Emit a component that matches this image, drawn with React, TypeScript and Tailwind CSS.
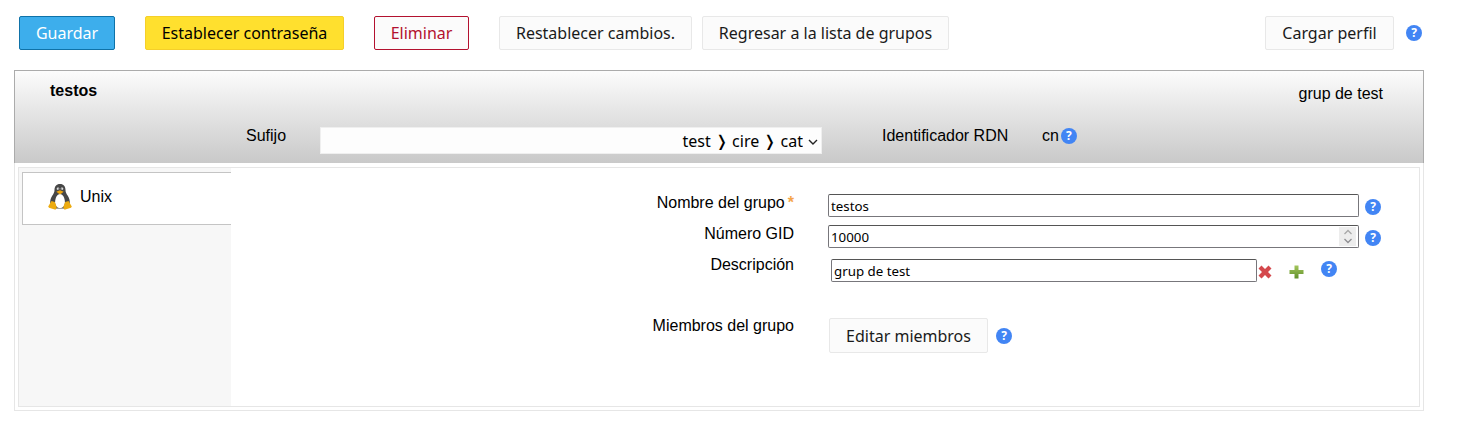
const sans = "font-['Liberation_Sans',Arial,sans-serif]";
const noto = "font-['Noto_Sans',sans-serif]";

function Help({ className = '' }: { className?: string }) {
  return (
    <span
      className={`flex h-4 w-4 shrink-0 items-center justify-center rounded-full bg-[#4285f4] font-['Noto_Sans',sans-serif] text-[12px] leading-none font-bold text-white ${className}`}
    >
      ?
    </span>
  );
}

function Penguin() {
  return (
    <svg width="24" height="26" viewBox="0 0 24 26" className="shrink-0">
      <path d="M12 0C8.300 0 6.500 2.600 6.500 6c0 2.400-1 3.800-2.300 5.800C2.800 14 2 16.500 2.200 19.500L6 24.500h12l3.800-5c.2-3-.6-5.500-2-7.700-1.300-2-2.300-3.400-2.300-5.800C17.500 2.600 15.700 0 12 0z" fill="#474747" />
      <path d="M12 10c-2.800 0-4.900 4-4.900 8.200 0 3.700 2.100 5.800 4.900 5.800s4.900-2.100 4.900-5.800C16.900 14 14.800 10 12 10z" fill="#fff" />
      <circle cx="10" cy="4.800" r="1.300" fill="#e8e8e8" />
      <circle cx="14" cy="4.800" r="1.300" fill="#e8e8e8" />
      <circle cx="10.300" cy="5" r=".6" fill="#222" />
      <circle cx="13.700" cy="5" r=".6" fill="#222" />
      <path d="M8.300 7.800 12 6.200l3.700 1.600L12 10.400z" fill="#eda50f" />
      <path d="M3.500 17 .2 22.500l.8 1.300 6.500 2 1.300-2.600L6.800 18z" fill="#edab0f" />
      <path d="M20.500 17l3.300 5.500-.8 1.300-6.500 2-1.300-2.600L17.200 18z" fill="#edab0f" />
    </svg>
  );
}

function Btn({ children, className = '' }: { children: React.ReactNode; className?: string }) {
  return <button className={`rounded-[2px] border text-[16px] leading-none ${noto} ${className}`}>{children}</button>;
}

const plainBtn = 'border-[#e8e8e8] bg-[#fbfbfb] text-[#1a1a1a]';

function Label({ children, className = '' }: { children: React.ReactNode; className?: string }) {
  return (
    <label className={`w-[563px] shrink-0 text-right text-[16px] leading-[18px] text-black ${sans} ${className}`}>{children}</label>
  );
}

const inputCls = `h-[23px] rounded-[2px] border border-[#77767b] border-t-[#555] bg-white px-[2px] text-[13.300px] text-black outline-none ${noto}`;

export default function App() {
  return (
    <div className="h-[432px] w-[1464px] overflow-hidden bg-white">
      {/* Toolbar */}
      <div className="flex pt-4 pl-[19px]">
        <Btn className="h-[34px] w-[96px] border-[#0f72a8] bg-[#3daeec] text-white">Guardar</Btn>
        <Btn className="ml-[30px] h-[34px] w-[199px] border-[#f5cf2a] bg-[#ffe02e] text-black">Establecer contraseña</Btn>
        <Btn className="ml-[30px] h-[34px] w-[95px] border-[#b3112f] bg-[#fbfbfb] text-[#b3112f]">Eliminar</Btn>
        <Btn className={`ml-[30px] h-[34px] w-[193px] ${plainBtn}`}>Restablecer cambios.</Btn>
        <Btn className={`ml-[10px] h-[34px] w-[247px] ${plainBtn}`}>Regresar a la lista de grupos</Btn>
        <Btn className={`ml-[316px] h-[34px] w-[129px] ${plainBtn}`}>Cargar perfil</Btn>
        <Help className="mt-[9px] ml-3" />
      </div>

      {/* Panel */}
      <div className="mt-5 ml-[14px] h-[341px] w-[1410px] border border-t-0 border-[#e6e6e6]">
        <div className={`-mx-px h-[93px] w-[1410px] border border-b-0 border-[#ababab] bg-gradient-to-b from-[#fcfcfc] to-[#c9c9c9] text-black ${sans}`}>
          <div className="flex justify-between pt-[11px] pr-10 pl-[35px]">
            <span className="text-[16px] leading-[18px] font-bold">testos</span>
            <span className="mt-[3px] text-[16px] leading-[18px]">grup de test</span>
          </div>
          <div className="mt-[24px] flex items-start pl-[231px] text-[16px] leading-[18px]">
            <span className="w-[74px]">Sufijo</span>
            <div className="relative h-[27px] w-[502px]">
              <select
                defaultValue="a"
                className={`h-[27px] w-[502px] appearance-none border border-[#efefef] bg-[#fdfdfd] pr-[18px] text-[16px] [text-align-last:right] ${noto}`}
              >
                <option value="a">test ❭ cire ❭ cat</option>
              </select>
              <svg width="10" height="6" viewBox="0 0 10 6" className="absolute top-[12px] right-[4px]">
                <path d="M1 1l4 4 4-4" fill="none" stroke="#222" strokeWidth="1.400" />
              </svg>
            </div>
            <span className="ml-[60px] w-[160px]">Identificador RDN</span>
            <span>cn</span>
            <Help className="mt-[1px] ml-[2px]" />
          </div>
        </div>

        <div className="mx-[3px] mt-1 flex h-[240px] border border-[#e6e6e6]">
          {/* Sidebar */}
          <div className="w-[212px] shrink-0 bg-[#f7f7f7] pt-1 pl-[3px]">
            <div className={`flex h-[53px] items-center border border-r-0 border-[#c4c4c4] bg-white pb-[3px] pl-[25px] ${sans}`}>
              <Penguin />
              <span className="ml-[8px] text-[16px] text-black">Unix</span>
            </div>
          </div>

          {/* Form */}
          <div className="flex-1 pt-[26px]">
            <div className="flex items-start">
              <Label>
                Nombre del grupo<span className="ml-[3px] font-bold text-[#f5a54a]">*</span>
              </Label>
              <input readOnly value="testos" className={`ml-[34px] w-[531px] ${inputCls}`} />
              <Help className="mt-[5px] ml-[6px]" />
            </div>
            <div className="mt-2 flex items-start">
              <Label>Número GID</Label>
              <div className="relative ml-[34px] h-[23px] w-[531px]">
                <input
                  readOnly
                  type="number"
                  value="10000"
                  className={`block w-[531px] appearance-none [&::-webkit-inner-spin-button]:appearance-none ${inputCls}`}
                />
                <span className="absolute top-[2px] right-[3px] flex h-[19px] w-[17px] items-center justify-center bg-[#ededed]">
                  <svg width="10" height="15" viewBox="0 0 10 15">
                    <path d="M1.500 5 5 1.500 8.500 5" fill="none" stroke="#a8a8a8" strokeWidth="1.300" />
                    <path d="M1.500 10 5 13.500 8.500 10" fill="none" stroke="#8e8e92" strokeWidth="1.300" />
                  </svg>
                </span>
              </div>
              <Help className="mt-[5px] ml-[6px]" />
            </div>
            <div className="mt-[11px] flex items-start">
              <Label className="-mt-[3px]">Descripción</Label>
              <input readOnly value="grup de test" className={`ml-[37px] w-[426px] ${inputCls}`} />
              <svg width="14" height="14" viewBox="0 0 14 14" className="mt-[6px] ml-[1px]">
                <path d="M.5 3.500 3.500.5 7 4l3.500-3.500 3 3L10 7l3.500 3.500-3 3L7 10l-3.500 3.500-3-3L4 7z" fill="#d4484c" />
              </svg>
              <svg width="15" height="14" viewBox="0 0 15 14" className="mt-[6px] ml-[17px]">
                <defs>
                  <linearGradient id="plus" x1="0" y1="0" x2="0" y2="1">
                    <stop offset="0" stopColor="#a4c65c" />
                    <stop offset="1" stopColor="#5f8f2a" />
                  </linearGradient>
                </defs>
                <path d="M5.500.5h4v4.500h5v4h-5v4.500h-4V9H.5V5h5z" fill="url(#plus)" />
              </svg>
              <Help className="mt-[2px] ml-[17px]" />
            </div>
            <div className="mt-9 flex items-start">
              <Label className="-mt-[1px]">Miembros del grupo</Label>
              <Btn className={`ml-[35px] h-[35px] w-[159px] ${plainBtn}`}>Editar miembros</Btn>
              <Help className="mt-[10px] ml-2" />
            </div>
          </div>
        </div>
      </div>
    </div>
  );
}
